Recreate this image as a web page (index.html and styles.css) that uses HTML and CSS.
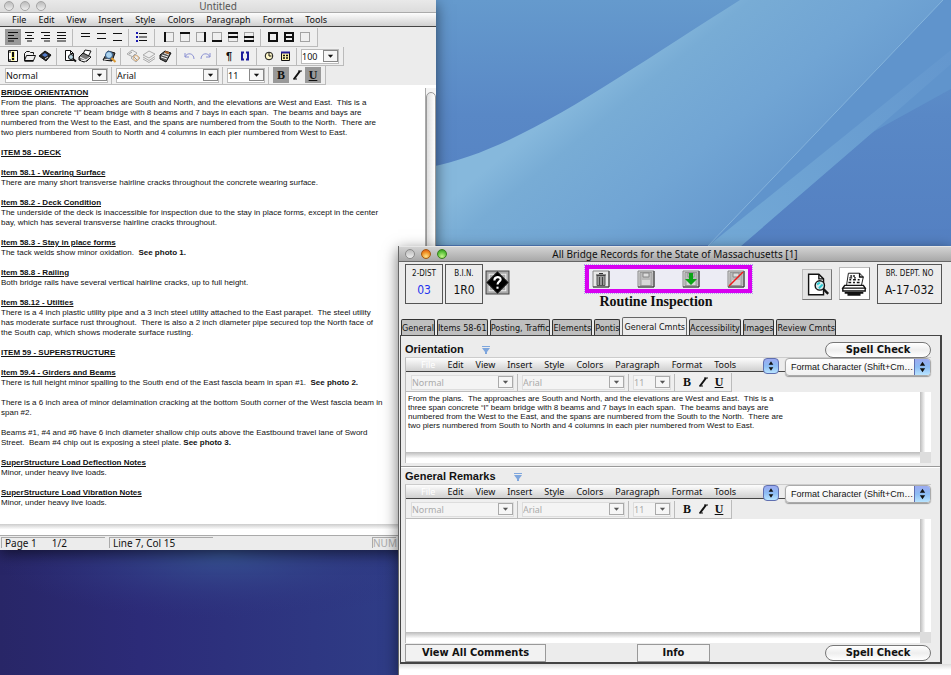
FILE: index.html
```html
<!DOCTYPE html>
<html lang="en">
<head>
<meta charset="utf-8">
<title>Bridge Records</title>
<link rel="stylesheet" href="styles.css">
</head>
<body>
<svg class="defs" aria-hidden="true">
  <symbol id="al" viewBox="0 0 16 16"><path d="M3 3.500h10M3 6.500h6M3 9.500h10M3 12h6"/></symbol>
  <symbol id="ac" viewBox="0 0 16 16"><path d="M4 3.500h9M6 6.500h5M4 9.500h9M6 12h5"/></symbol>
  <symbol id="ar" viewBox="0 0 16 16"><path d="M4 3.500h9M7 6.500h6M4 9.500h9M7 12h6"/></symbol>
  <symbol id="aj" viewBox="0 0 16 16"><path d="M4 3.500h9M4 6.500h9M4 9.500h9M4 12h9"/></symbol>
  <symbol id="s1" viewBox="0 0 16 16"><path d="M4 4.500h9M4 7.500h9"/></symbol>
  <symbol id="s2" viewBox="0 0 16 16"><path d="M4 4.500h9M4 9.500h9"/></symbol>
  <symbol id="s3" viewBox="0 0 16 16"><path d="M4 4.500h9M4 11.500h9"/></symbol>
  <symbol id="bul" viewBox="0 0 16 16"><path d="M6 4.500h8M6 8h8M6 11.500h8"/><path d="M3 4h2M3 8h2M3 12h2" stroke="#1a1ab0" stroke-width="2"/></symbol>
  <symbol id="bx" viewBox="0 0 16 16"><path d="M3.500 3.500h9v9h-9z" stroke="#555" stroke-dasharray="1 1"/></symbol>
  <symbol id="arrow" viewBox="0 0 8 8"><path d="M1 2.500h6L4 6z" fill="currentColor" stroke="none"/></symbol>
  <symbol id="new" viewBox="0 0 16 16"><path d="M3.500 2.500h9v11h-9z" fill="#fff"/><path d="M8 3.500v9" stroke="#e9df3c" stroke-width="3"/><path d="M8 4v5M8 10v2" stroke-width="2"/><path d="M5 3v2M5 11v2"/></symbol>
  <symbol id="open" viewBox="0 0 16 16"><path d="M3.500 12.500v-7l2-2h3l1 1h3v2M3.500 12.500l2-5h9l-2 5z" fill="#eee"/><path d="M3.500 13h9" stroke-width="1.500"/></symbol>
  <symbol id="save" viewBox="0 0 16 16"><path d="M2 8l6-5 6 4-5 6z" fill="#222"/><path d="M5 7l3-2 3 2-3 2z" fill="#547dcc" stroke="none"/><path d="M8 11l3-2" stroke="#ddd"/></symbol>
  <symbol id="prev" viewBox="0 0 16 16"><path d="M4.500 2.500h5l3 3v7h-8z" fill="#fff"/><path d="M9.500 2.500v3h3"/><circle cx="10" cy="9" r="2.500" fill="#bcd8e4"/><path d="M12 11l3 2.500" stroke-width="2"/></symbol>
  <symbol id="prn" viewBox="0 0 16 16"><path d="M6 6l2-4 6 1-3 6z" fill="#fff"/><path d="M2 9l4-4 8 4-4 4-3 1-5-2z" fill="#777"/><path d="M3 9l6 3 4-3M4 12l5 1" stroke="#fff"/></symbol>
  <symbol id="find" viewBox="0 0 16 16"><path d="M2 12l5-9 7 2-3 8z" fill="#555"/><path d="M5 5l7 2M3 12l6-1" stroke="#eee"/><circle cx="8" cy="7" r="3.500" fill="#acd4ef" stroke="#335c8c"/><path d="M10.500 10l4 4" stroke="#dc9b35" stroke-width="2"/></symbol>
  <symbol id="cut" viewBox="0 0 16 16"><path d="M2 6l5-4 5 3-4 4zM6 10l4-4 5 4-4 4z" fill="#eee" stroke="#aaa"/><path d="M4 6l3-2M9 9l3 3" stroke="#999"/><circle cx="11" cy="10" r="2.500" stroke="#e2b580"/></symbol>
  <symbol id="cpy" viewBox="0 0 16 16"><path d="M2 7l6-4 6 3-6 4zM2 9l6 3.500 6-4M2 11l6 3.500 6-4" fill="#eee" stroke="#aaa"/></symbol>
  <symbol id="pst" viewBox="0 0 16 16"><path d="M3 7l5-4 6 2-5 9-6-3z" fill="#555"/><path d="M4 9l6 2M5 7l6 2M7 5l5 2" stroke="#eee"/><path d="M8 4l4 1" stroke="#b36d35" stroke-width="2"/></symbol>
  <symbol id="undo" viewBox="0 0 16 16"><path d="M4 5v4h4M4 9c2-5 9-4 9 2" stroke="#8a90d2"/></symbol>
  <symbol id="redo" viewBox="0 0 16 16"><path d="M13 5v4H9M13 9c-2-5-9-4-9 2" stroke="#8a90d2"/></symbol>
  <symbol id="fld" viewBox="0 0 16 16"><path d="M7 4.500H5v7h2M9 4.500h2v7H9" stroke="#1c1c9c" stroke-width="2"/></symbol>
  <symbol id="clk" viewBox="0 0 16 16"><circle cx="8" cy="8" r="3.800" fill="#fff8c8"/><path d="M8 5v3h2.500"/></symbol>
  <symbol id="cal" viewBox="0 0 16 16"><path d="M4.500 4.500h8v8h-8z" fill="#fff3a8"/><path d="M4 4.500h9" stroke="#241c94" stroke-width="2"/><path d="M6 7.500h2M9 7.500h2M6 10h2M9 10h2" stroke-width="1.500"/></symbol>
  <symbol id="ital" viewBox="0 0 16 16"><path d="M5 12L11 4" stroke-width="2"/><path d="M9 4h4M4 12h4"/></symbol>
  <symbol id="trash" viewBox="0 0 18 18"><path d="M1 1h16v16H1z" fill="#e8e8e8" stroke="#888"/><path d="M1 17h16V1" stroke="#333"/><path d="M5 5.500h8v10H5z" fill="#999" stroke="#555"/><path d="M4 5h10M7 3.500h4" stroke="#333"/><path d="M7.500 7v8M10.500 7v8" stroke="#444"/></symbol>
  <symbol id="flop" viewBox="0 0 18 18"><path d="M1 1h16v16H1z" fill="#dcdcdc" stroke="#888"/><path d="M1 17h16V1" stroke="#333"/><path d="M3 2.500h12v13H3z" fill="#bbb" stroke="#999"/><path d="M6 3h6v4H6z" fill="#ddd" stroke="#888"/><path d="M5 10h8v5H5z" fill="#d8d8d8" stroke="none"/></symbol>
  <symbol id="preview" viewBox="0 0 30 30"><path d="M6 4h11l5 5v17H6z" fill="#fff" stroke-width="1.500"/><path d="M17 4v5h5" stroke-width="1.500"/><circle cx="18" cy="16" r="5" fill="#d5ecee" stroke-width="1.500"/><path d="M15 15l3-2M17 19l4-4" stroke="#2bc9d2" stroke-width="2"/><path d="M22 20l5 5" stroke-width="2.500"/></symbol>
  <symbol id="printer" viewBox="0 0 30 30"><path d="M7 17L9 4h12l4 4-2 9" fill="#fff"/><path d="M21 4v4h4M11 7h2M14 7h2M10 9h3M15 9h2M10 11h2M14 11h3M19 11h2M9 14h3M14 14h2M18 14h3" stroke-width="1.500"/><path d="M5 17h20l2 3H3zM3 20h24v3H3z" fill="#fff" stroke-width="1.500"/><path d="M5 25h20M8 27h14" stroke-width="2"/></symbol>
  <symbol id="flag" viewBox="0 0 8 8"><path d="M0 0h8v1H0zM0 2h8L5 6v2H3V6z" fill="#7ea6dd" stroke="none"/></symbol>
</svg>
<svg class="wall" viewBox="0 0 951 675" preserveAspectRatio="none" aria-hidden="true">
  <defs>
    <linearGradient id="sky" x1="0" y1="0" x2="0" y2="1"><stop offset="0" stop-color="#659acd"/><stop offset=".17" stop-color="#5988c6"/><stop offset=".36" stop-color="#5480c2"/><stop offset=".75" stop-color="#35498f"/><stop offset=".85" stop-color="#32428a"/><stop offset="1" stop-color="#27226a"/></linearGradient>
    <linearGradient id="arc" gradientUnits="userSpaceOnUse" x1="590" y1="85" x2="740" y2="270"><stop offset="0" stop-color="#86b8dc"/><stop offset=".15" stop-color="#78acd5"/><stop offset=".5" stop-color="#71a5d4"/><stop offset="1" stop-color="#6194cb"/></linearGradient>
    <linearGradient id="ray" gradientUnits="userSpaceOnUse" x1="720" y1="245" x2="951" y2="60"><stop offset="0" stop-color="#73a9d6"/><stop offset="1" stop-color="#6497ce"/></linearGradient>
    <radialGradient id="night" gradientUnits="userSpaceOnUse" cx="0" cy="0" r="1" gradientTransform="translate(225 555) scale(230 65)"><stop offset="0" stop-color="#375394"/><stop offset="1" stop-color="#2e327f" stop-opacity="0"/></radialGradient>
    <linearGradient id="deep" x1="0" y1="0" x2="1" y2="0"><stop offset="0" stop-color="#282667"/><stop offset=".35" stop-color="#2c2b78"/><stop offset="1" stop-color="#2f3d87"/></linearGradient>
  </defs>
  <path d="M0 0h951v675H0z" fill="url(#sky)"/>
  <path d="M430 167C520 150 620 75 740 0h203L709 245H430z" fill="url(#arc)"/>
  <path d="M943 0h8v89L873 132 741 246H708z" fill="#6094cc"/>
  <path d="M708 246L951 50v14L873 132 741 246z" fill="url(#ray)"/>
  <path d="M708 246L943 0" fill="none" stroke="#91bfe2" stroke-opacity=".75"/>
  <path d="M0 545h400v130H0z" fill="url(#deep)"/>
  <path d="M0 545h400v130H0z" fill="url(#night)"/>
  <path d="M398 674h553v1H398z" fill="#171646"/>
</svg>

<main class="desktop">
<section class="win doc-win" aria-label="Untitled">
  <header class="title pale"><span class="lights"><i></i><i></i><i></i></span><h1>Untitled</h1></header>
  <nav class="menus"><a href="#">File</a><a href="#">Edit</a><a href="#">View</a><a href="#">Insert</a><a href="#">Style</a><a href="#">Colors</a><a href="#">Paragraph</a><a href="#">Format</a><a href="#">Tools</a></nav>
  <div class="bars">
    <div class="bar">
      <button class="on" aria-label="Align left"><svg><use href="#al"/></svg></button><button aria-label="Center"><svg><use href="#ac"/></svg></button><button aria-label="Align right"><svg><use href="#ar"/></svg></button><button aria-label="Justify"><svg><use href="#aj"/></svg></button><i class="sep"></i>
      <button aria-label="Single spacing"><svg><use href="#s1"/></svg></button><button aria-label="Medium spacing"><svg><use href="#s2"/></svg></button><button aria-label="Double spacing"><svg><use href="#s3"/></svg></button><i class="sep"></i>
      <button aria-label="Bullets"><svg><use href="#bul"/></svg></button><i class="sep wide"></i>
      <button aria-label="Left border"><svg><use href="#bx"/><path d="M4 3v10" stroke-width="2"/></svg></button><button aria-label="Top border"><svg><use href="#bx"/><path d="M3 4h10" stroke-width="2"/></svg></button><button aria-label="Right border"><svg><use href="#bx"/><path d="M12 3v10" stroke-width="2"/></svg></button><button aria-label="Bottom border"><svg><use href="#bx"/><path d="M3 12h10" stroke-width="2"/></svg></button><button aria-label="Top and middle border"><svg><use href="#bx"/><path d="M3 4h10M3 8h10" stroke-width="2"/></svg></button><button aria-label="Middle and bottom border"><svg><use href="#bx"/><path d="M3 8h10M3 12h10" stroke-width="2"/></svg></button><i class="sep"></i>
      <button aria-label="Box"><svg><path d="M4 4h8v8H4z" stroke-width="2"/></svg></button><button aria-label="Grid"><svg><path d="M4 4h8v8H4zM3 8h10" stroke-width="2"/></svg></button><button aria-label="No border"><svg><use href="#bx"/></svg></button>
    </div>
    <div class="bar">
      <button aria-label="New"><svg><use href="#new"/></svg></button><button aria-label="Open"><svg><use href="#open"/></svg></button><button aria-label="Save"><svg><use href="#save"/></svg></button><i class="sep"></i>
      <button aria-label="Preview"><svg><use href="#prev"/></svg></button><button aria-label="Print"><svg><use href="#prn"/></svg></button><i class="sep"></i>
      <button aria-label="Find"><svg><use href="#find"/></svg></button><i class="sep"></i>
      <button aria-label="Cut"><svg><use href="#cut"/></svg></button><button aria-label="Copy"><svg><use href="#cpy"/></svg></button><button aria-label="Paste"><svg><use href="#pst"/></svg></button><i class="sep"></i>
      <button aria-label="Undo"><svg><use href="#undo"/></svg></button><button aria-label="Redo"><svg><use href="#redo"/></svg></button><i class="sep"></i>
      <button class="mark" aria-label="Paragraph marks">¶</button><button aria-label="Field"><svg><use href="#fld"/></svg></button><i class="sep"></i>
      <button aria-label="Time"><svg><use href="#clk"/></svg></button><button aria-label="Date"><svg><use href="#cal"/></svg></button><i class="sep"></i>
      <span class="combo small"><select aria-label="Zoom"><option>100</option></select><svg><use href="#arrow"/></svg></span>
    </div>
    <div class="bar">
      <span class="combo"><select aria-label="Style"><option>Normal</option></select><svg><use href="#arrow"/></svg></span><i class="sep"></i>
      <span class="combo"><select aria-label="Font"><option>Arial</option></select><svg><use href="#arrow"/></svg></span><i class="sep"></i>
      <span class="combo small"><select aria-label="Size"><option>11</option></select><svg><use href="#arrow"/></svg></span><i class="sep"></i>
      <button class="on serif">B</button><button aria-label="Italic"><svg><use href="#ital"/></svg></button><button class="on serif"><u>U</u></button>
    </div>
  </div>
  <div class="paper">
    <article class="page">
      <h2>BRIDGE ORIENTATION</h2>
      <p>From the plans.&nbsp; The approaches are South and North, and the elevations are West and East.&nbsp; This is a<br>three span concrete “I” beam bridge with 8 beams and 7 bays in each span.&nbsp; The beams and bays are<br>numbered from the West to the East, and the spans are numbered from the South to the North.&nbsp; There are<br>two piers numbered from South to North and 4 columns in each pier numbered from West to East.</p>
      <h2>ITEM 58 - DECK</h2>
      <h2>Item 58.1 - Wearing Surface</h2>
      <p>There are many short transverse hairline cracks throughout the concrete wearing surface.</p>
      <h2>Item 58.2 - Deck Condition</h2>
      <p>The underside of the deck is inaccessible for inspection due to the stay in place forms, except in the center<br>bay, which has several transverse hairline cracks throughout.</p>
      <h2>Item 58.3 - Stay in place forms</h2>
      <p>The tack welds show minor oxidation.&nbsp; <b>See photo 1.</b></p>
      <h2>Item 58.8 - Railing</h2>
      <p>Both bridge rails have several vertical hairline cracks, up to full height.</p>
      <h2>Item 58.12 - Utilties</h2>
      <p>There is a 4 inch plastic utility pipe and a 3 inch steel utility attached to the East parapet.&nbsp; The steel utility<br>has moderate surface rust throughout.&nbsp; There is also a 2 inch diameter pipe secured top the North face of<br>the South cap, which shows moderate surface rusting.</p>
      <h2>ITEM 59 - SUPERSTRUCTURE</h2>
      <h2>Item 59.4 - Girders and Beams</h2>
      <p>There is full height minor spalling to the South end of the East fascia beam in span #1.&nbsp; <b>See photo 2.</b></p>
      <p>There is a 6 inch area of minor delamination cracking at the bottom South corner of the West fascia beam in<br>span #2.</p>
      <p>Beams #1, #4 and #6 have 6 inch diameter shallow chip outs above the Eastbound travel lane of Sword<br>Street.&nbsp; Beam #4 chip out is exposing a steel plate. <b>See photo 3.</b></p>
      <h2>SuperStructure Load Deflection Notes</h2>
      <p>Minor, under heavy live loads.</p>
      <h2>SuperStructure Load Vibration Notes</h2>
      <p>Minor, under heavy live loads.</p>
    </article>
    <div class="track"><i></i></div>
  </div>
  <div class="hstrip"></div>
  <footer class="status"><span class="cell"><span>Page 1</span><span>1/2</span></span><span class="cell">Line 7, Col 15</span><span class="cell num">NUM</span></footer>
</section>

<section class="win rec-win" aria-label="All Bridge Records">
  <header class="title"><span class="lights"><i></i><i class="amber"></i><i class="green"></i></span><h1>All Bridge Records for the State of Massachusetts [1]</h1></header>
  <div class="head">
    <div class="fact"><small>2-DIST</small><span class="blue">03</span></div>
    <div class="fact"><small>B.I.N.</small><span>1R0</span></div>
    <button class="help" aria-label="Help"><svg viewBox="0 0 24 24"><path d="M1 1h22v22H1z" fill="#aaa" stroke="#444"/><path d="M4 9V4h5M15 4h5v5M20 15v5h-5M9 20H4v-5" stroke="#eee"/><path d="M12 2l10 10-10 10L2 12z" fill="#000"/><path d="M9 10c0-4 6-4 6-1 0 2-3 2-3 5" stroke="#fff" stroke-width="2"/><path d="M11 16h2v2h-2z" fill="#fff" stroke="none"/></svg></button>
    <div class="mid">
      <div class="tools">
        <button aria-label="Delete"><svg><use href="#trash"/></svg></button>
        <button aria-label="Save record"><svg><use href="#flop"/></svg></button>
        <button aria-label="Load"><svg viewBox="0 0 18 18"><use href="#flop"/><path d="M7 3h4v6h4l-6 6-6-6h4z" fill="#0aa514" stroke="none"/></svg></button>
        <button aria-label="Cancel"><svg viewBox="0 0 18 18"><use href="#flop"/><path d="M2 16L16 2" stroke="#f01818" stroke-width="1.500"/></svg></button>
      </div>
      <h2>Routine Inspection</h2>
    </div>
    <button class="big" aria-label="Preview report"><svg><use href="#preview"/></svg></button>
    <button class="big lift" aria-label="Print report"><svg><use href="#printer"/></svg></button>
    <div class="fact last"><small>BR. DEPT. NO</small><span>A-17-032</span></div>
  </div>
  <div class="tabs" role="tablist"><button role="tab">General</button><button role="tab">Items 58-61</button><button role="tab">Posting, Traffic</button><button role="tab">Elements</button><button role="tab">Pontis</button><button role="tab" class="cur" aria-selected="true">General Cmnts</button><button role="tab">Accessibility</button><button role="tab">Images</button><button role="tab">Review Cmnts</button></div>
  <div class="panel">
    <div class="cap"><h3>Orientation</h3><svg><use href="#flag"/></svg><button class="pill">Spell Check</button></div>
    <div class="editor">
      <div class="top"><nav class="menus"><a href="#" class="off">File</a><a href="#">Edit</a><a href="#">View</a><a href="#">Insert</a><a href="#">Style</a><a href="#">Colors</a><a href="#">Paragraph</a><a href="#">Format</a><a href="#">Tools</a></nav>
        <button class="step" aria-label="Choose"><svg viewBox="0 0 8 12"><path d="M2 5l2-3 2 3zM2 7l2 3 2-3z"/></svg></button>
        <span class="pop"><select aria-label="Format character"><option>Format Character (Shift+Cm…</option></select><i class="step"><svg viewBox="0 0 8 12"><path d="M2 5l2-3 2 3zM2 7l2 3 2-3z"/></svg></i></span></div>
      <div class="bars dim"><div class="bar">
        <span class="combo"><select aria-label="Style" disabled><option>Normal</option></select><svg><use href="#arrow"/></svg></span><i class="sep"></i>
        <span class="combo"><select aria-label="Font" disabled><option>Arial</option></select><svg><use href="#arrow"/></svg></span><i class="sep"></i>
        <span class="combo small"><select aria-label="Size" disabled><option>11</option></select><svg><use href="#arrow"/></svg></span><i class="sep"></i>
        <button class="serif">B</button><button aria-label="Italic"><svg><use href="#ital"/></svg></button><button class="serif"><u>U</u></button>
      </div></div>
      <div class="area"><textarea aria-label="Orientation" rows="4" wrap="off">From the plans.  The approaches are South and North, and the elevations are West and East.  This is a
three span concrete “I” beam bridge with 8 beams and 7 bays in each span.  The beams and bays are
numbered from the West to the East, and the spans are numbered from the South to the North.  There are
two piers numbered from South to North and 4 columns in each pier numbered from West to East.</textarea><i class="v"></i><i class="h"></i><i class="c"></i></div>
    </div>
    <hr>
    <div class="cap"><h3>General Remarks</h3><svg><use href="#flag"/></svg></div>
    <div class="editor">
      <div class="top"><nav class="menus"><a href="#" class="off">File</a><a href="#">Edit</a><a href="#">View</a><a href="#">Insert</a><a href="#">Style</a><a href="#">Colors</a><a href="#">Paragraph</a><a href="#">Format</a><a href="#">Tools</a></nav>
        <button class="step" aria-label="Choose"><svg viewBox="0 0 8 12"><path d="M2 5l2-3 2 3zM2 7l2 3 2-3z"/></svg></button>
        <span class="pop"><select aria-label="Format character"><option>Format Character (Shift+Cm…</option></select><i class="step"><svg viewBox="0 0 8 12"><path d="M2 5l2-3 2 3zM2 7l2 3 2-3z"/></svg></i></span></div>
      <div class="bars dim"><div class="bar">
        <span class="combo"><select aria-label="Style" disabled><option>Normal</option></select><svg><use href="#arrow"/></svg></span><i class="sep"></i>
        <span class="combo"><select aria-label="Font" disabled><option>Arial</option></select><svg><use href="#arrow"/></svg></span><i class="sep"></i>
        <span class="combo small"><select aria-label="Size" disabled><option>11</option></select><svg><use href="#arrow"/></svg></span><i class="sep"></i>
        <button class="serif">B</button><button aria-label="Italic"><svg><use href="#ital"/></svg></button><button class="serif"><u>U</u></button>
      </div></div>
      <div class="area tall"><textarea aria-label="General Remarks"></textarea><i class="v"></i><i class="h"></i><i class="c"></i></div>
    </div>
    <div class="foot"><button class="flat wide">View All Comments</button><button class="flat">Info</button><button class="pill">Spell Check</button></div>
  </div>
  <div class="base"></div>
</section>
</main>
</body>
</html>
```
FILE: styles.css
```css
* { box-sizing: border-box; }
html, body { height: 100%; }
body { margin: 0; overflow: hidden; background: #2b2c74; font: 10px/12px "Noto Sans", "DejaVu Sans", sans-serif; color: #111; }
h1, h2, h3, p { margin: 0; font-size: inherit; font-weight: inherit; }
button, select, textarea { font: inherit; color: inherit; margin: 0; padding: 0; border: 0; background: none; border-radius: 0; appearance: none; outline: 0; }
select:disabled { opacity: 1; }
a { color: inherit; text-decoration: none; }
svg { display: block; fill: none; stroke: #111; }
.defs { position: absolute; width: 0; height: 0; }
.wall { position: absolute; inset: 0; width: 100%; height: 100%; stroke: none; }
.desktop { position: relative; height: 100%; }

.win { position: absolute; background: #ececec; box-shadow: 0 4px 14px rgba(0, 0, 0, .55); }
.doc-win { left: 0; right: 515px; top: 0; }
.rec-win { left: 398px; right: 0; top: 246px; border-left: 1px solid #666; }

.title { display: grid; grid-template-columns: 48px 1fr 48px; align-items: center; height: 16px; background: linear-gradient(#d2d2d2, #a8a8a8); border-top: 1px solid #e6e6e6; border-bottom: 1px solid #666; }
.title.pale { height: 13px; background: linear-gradient(#e9e9e9, #dcdcdc); border-top: 0; border-bottom-color: #aaa; color: #555; }
.title h1 { text-align: center; }
.lights { display: flex; gap: 6px; padding-left: 6px; }
.lights i { width: 10px; height: 10px; border: 1px solid #8b8b8b; border-radius: 50%; background: linear-gradient(#bbb, #eee); }
.lights .amber { border-color: #a45a10; background: radial-gradient(circle at 50% 80%, #ffe48a, #ee8b20 60%, #d9481d); }
.lights .green { border-color: #3a7d1d; background: radial-gradient(circle at 50% 80%, #c8f68c, #5ac23a 60%, #2c8c20); }
.pale .lights { padding-left: 4px; }
.pale .lights i { border-color: #a5a5a5; }

.menus { display: flex; align-items: center; gap: 12px; height: 14px; padding-left: 12px; font-size: 9px; background: linear-gradient(#fdfdfd, #d0d0d0); border-bottom: 1px solid #444; }
.menus .off { color: #fff; }

.bars { display: flex; flex-direction: column; align-items: flex-start; padding-top: 1px; font-size: 9px; }
.bar { display: flex; align-items: center; height: 19px; padding: 0 4px 0 5px; border: solid #bbb; border-width: 0 1px 1px 0; background: #efefef; }
.bar button { width: 16px; height: 16px; text-align: center; }
.bar button svg { width: 16px; height: 16px; }
.bar .on { background: #999; }
.bar .serif { font: bold 12px/16px "Liberation Serif", serif; }
.bar .mark { font: bold 11px/16px "Liberation Sans", Arial, sans-serif; }
.sep { width: 8px; height: 17px; border: solid transparent; border-width: 0 4px 0 3px; background: #bbb; background-clip: padding-box; }
.sep.wide { width: 12px; border-width: 0 6px 0 5px; }
.combo { display: flex; width: 103px; height: 15px; align-items: center; background: #fff; border: 1px solid #bbb; }
.combo.small { width: 38px; }
.combo select { flex: 1; min-width: 0; height: 13px; line-height: 13px; }
.combo svg { flex: none; width: 15px; height: 12px; padding: 1px 3px; border: 1px solid #888; background: #f6f6f6; stroke: none; color: #111; }
.dim .combo { color: #aaa; border-color: #ddd; background: #f4f4f4; }
.dim .combo svg { border-color: #aaa; color: #555; }

.paper { display: flex; background: #fff; padding-top: 3px; }
.page { flex: 1; min-width: 0; padding: 0 0 16px 1px; font: 8px/10px "Liberation Sans", Arial, sans-serif; white-space: nowrap; }
.page h2 { font-weight: bold; text-decoration: underline; }
.page p + h2, .page h2 + h2, .page p + p { margin-top: 10px; }
.track { width: 11px; padding-top: 4px; border-left: 1px solid #aaa; background: #f4f4f4; }
.track i { display: block; height: 100%; border: 1px solid #999; border-radius: 6px 6px 0 0; background: linear-gradient(90deg, #ddd, #fff); }
.hstrip { height: 12px; background: linear-gradient(#ccc, #fff 50%); border-bottom: 1px solid #aaa; }
.status { display: flex; gap: 4px; height: 14px; padding: 1px 1px 2px; line-height: 11px; }
.cell { width: 104px; padding-left: 3px; border: solid #aaa; border-width: 1px 0 0 1px; }
.cell span { margin-right: 15px; }
.cell.num { width: 24px; padding: 0; margin: 0 39px 0 auto; color: #aaa; }

.head { display: flex; align-items: flex-start; height: 55px; padding: 2px 9px 0 6px; gap: 2px; }
.fact { display: flex; flex-direction: column; align-items: center; gap: 3px; width: 38px; height: 40px; padding-top: 3px; border: 1px solid #555; font: 12px/14px "DejaVu Sans Condensed", "DejaVu Sans", sans-serif; white-space: nowrap; }
.fact small { font-size: 8px; line-height: 12px; }
.fact.last { width: 65px; margin-left: 5px; }
.blue { color: #2233ee; }
.help { width: 25px; height: 25px; margin: 6px 0 0; }
.mid { flex: 1; display: flex; flex-direction: column; align-items: center; padding: 1px 0 0 24px; }
.tools { display: flex; justify-content: space-between; align-items: center; width: 167px; height: 28px; padding: 0 3px; border: 4px solid #d800f0; outline: 1px dotted #b09cf0; background: #ececf4; }
.tools button, .tools svg { width: 18px; height: 18px; }
.mid h2 { padding-right: 24px; font: bold 14px/18px "Liberation Serif", serif; }
.big { width: 30px; height: 31px; margin: 5px 5px 0 0; border: 1px solid #777; border-top-color: #bbb; border-left-color: #bbb; background: #e4e4e4; }
.big svg { width: 28px; height: 29px; }
.big.lift { width: 31px; height: 33px; margin: 3px 0 0; background: #fff; }

.tabs { display: flex; align-items: flex-end; gap: 2px; height: 18px; padding-left: 2px; font: 9px/14px "DejaVu Sans Condensed", "DejaVu Sans", sans-serif; white-space: nowrap; }
.tabs button { height: 16px; border: 1px solid #333; border-bottom: 0; border-radius: 2px 2px 0 0; background: #bfbfbf; }
.tabs .cur { height: 18px; padding: 0 1px; border-color: #666; background: #ececec; }

.panel { margin: 0 9px 0 1px; padding: 6px 9px 0 4px; border: 1px solid #444; border-width: 1px 2px 2px 1px; }
.cap { display: flex; align-items: center; height: 15px; }
.cap h3 { font: bold 11px/13px "Liberation Sans", Arial, sans-serif; }
.cap svg { width: 8px; height: 8px; margin-left: 18px; }
.pill { margin-left: auto; width: 106px; height: 16px; border: 1px solid #777; border-radius: 8px; background: linear-gradient(#fff, #eee 50%, #fff); font: bold 11px/13px "DejaVu Sans Condensed", "DejaVu Sans", sans-serif; }
.editor { border-left: 1px solid #bbb; border-top: 1px solid #ccc; }
.top { display: flex; height: 14px; background: linear-gradient(90deg, #444, #444) 0 100% / 380px 1px no-repeat; }
.top .menus { flex: 1; padding-left: 15px; }
.step { flex: none; width: 16px; height: 16px; margin-right: 6px; border: 1px solid #5f6fb0; border-radius: 4px; background: linear-gradient(#9caaf0, #8cbcf4 50%, #b8e4ff); }
.step svg { width: 100%; height: 100%; fill: #111; stroke: none; }
.pop { display: flex; flex: none; width: 146px; height: 18px; border: 1px solid #aaa; border-radius: 4px; background: linear-gradient(#fff, #f0f0f0); box-shadow: 0 1px 1px #999; font: 9px/16px "Liberation Sans", Arial, sans-serif; }
.pop select { flex: 1; min-width: 0; padding-left: 5px; }
.pop .step { margin: 0; height: 16px; border-width: 0 0 0 1px; border-radius: 0 3px 3px 0; }
.area { display: grid; grid-template: 1fr 11px / 1fr 11px; height: 71px; }
.area.tall { height: 124px; }
.area textarea { grid-area: 1 / 1; resize: none; overflow: hidden; padding: 2px 2px 0; background: #fff; font: 8px/9px "Liberation Sans", Arial, sans-serif; white-space: pre; }
.v { background: linear-gradient(90deg, #bbb, #fff 50%); }
.h { background: linear-gradient(#bbb, #fff 60%); }
.c { background: #ddd; }
hr { height: 2px; margin: 3px -9px 1px -4px; border: 0; border-top: 1px solid #999; background: #fff; }
.foot { display: flex; align-items: center; height: 19px; }
.flat { width: 73px; height: 18px; border: 1px solid #999; background: #f2f2f2; font: bold 11px/14px "DejaVu Sans Condensed", "DejaVu Sans", sans-serif; }
.flat.wide { width: 141px; margin-right: 91px; }
.base { height: 12px; background: linear-gradient(#ddd, #fff 50%); }
```
